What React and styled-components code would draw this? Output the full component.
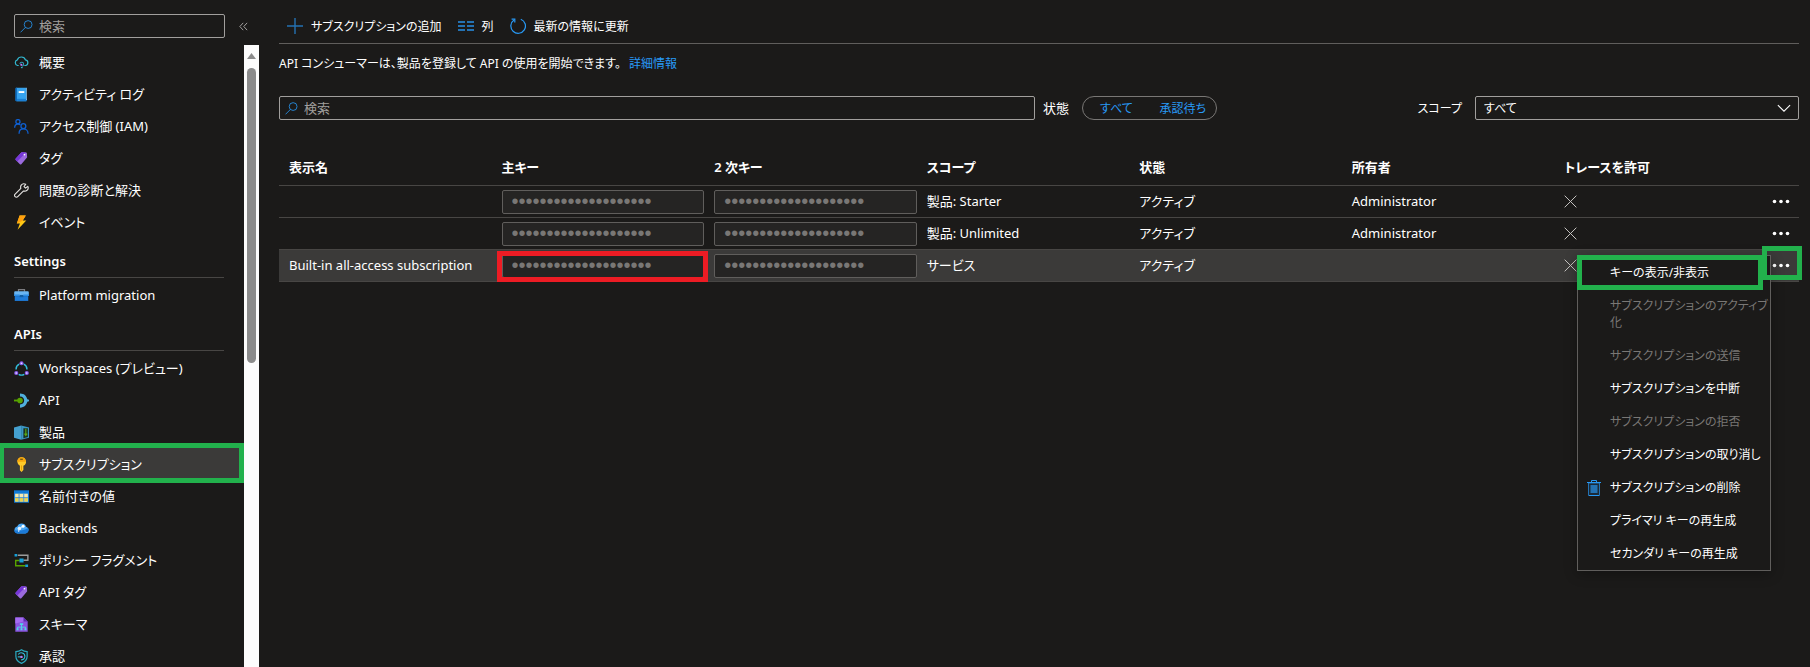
import React from "react";
import styled, { createGlobalStyle, css } from "styled-components";

const color = {
  page: "#1b1a19",
  raised: "#3b3a39",
  field: "#252423",
  line: "#484644",
  strong: "#605e5c",
  edge: "#a19f9d",
  text: "#ffffff",
  muted: "#797775",
  accent: "#2899f5",
  green: "#22b14c",
  red: "#ed1c24",
};

const GlobalStyle = createGlobalStyle`
  *, *::before, *::after { box-sizing: border-box; }
  body { margin: 0; background: ${color.page}; }
  body, button, input, select {
    font-family: "Noto Sans", "Noto Sans CJK JP", sans-serif;
    font-size: 13px;
    line-height: 17px;
    font-feature-settings: "palt";
    color: ${color.text};
  }
`;

const Shell = styled.div`
  display: flex;
  height: 100vh;
  overflow: hidden;
  background: ${color.page};
`;

/* ---------- Sidebar ---------- */

const Sidebar = styled.aside`
  flex: 0 0 259px;
  min-width: 0;
  display: flex;
  flex-direction: column;
`;

const SidebarTop = styled.div`
  display: flex;
  align-items: center;
  gap: 14px;
  padding: 14px 11px 7px 14px;
`;

const SearchBox = styled.label`
  display: flex;
  align-items: center;
  gap: 6px;
  flex: 1;
  min-width: 0;
  height: 24px;
  padding: 0 5px;
  border: 1px solid ${color.edge};
  border-radius: 2px;
  > svg { flex: none; }
`;

const SearchInput = styled.input`
  flex: 1;
  min-width: 0;
  padding: 0;
  border: 0;
  outline: 0;
  background: transparent;
  &::placeholder { color: ${color.edge}; opacity: 1; }
`;

const PlainButton = styled.button`
  display: inline-flex;
  align-items: center;
  padding: 0;
  border: 0;
  background: transparent;
  cursor: pointer;
`;

const SidebarBody = styled.div`
  display: flex;
  flex: 1;
  min-height: 0;
`;

const Nav = styled.nav`
  flex: 1;
  min-width: 0;
  padding-top: 1px;
  overflow: hidden;
`;

const NavHeading = styled.h2`
  margin: 0 20px 1px 14px;
  padding: 15px 0 7px;
  border-bottom: 1px solid ${color.line};
  font-size: 13px;
  line-height: 17px;
  font-weight: 600;
`;

const NavLink = styled.a`
  position: relative;
  display: flex;
  align-items: center;
  gap: 10px;
  height: 32px;
  padding-left: 14px;
  color: ${color.text};
  text-decoration: none;
  white-space: nowrap;
  background: ${(p) => (p.$active ? color.raised : "transparent")};
`;

const Highlight = styled.span`
  position: absolute;
  inset: ${(p) => p.$inset};
  border: 5px solid ${(p) => p.$color};
  pointer-events: none;
  z-index: 3;
`;

const ScrollTrack = styled.div`
  display: flex;
  flex-direction: column;
  align-items: center;
  gap: 9px;
  width: 15px;
  padding-top: 8px;
  background: #fcfcfc;
`;

const ScrollThumb = styled.div`
  width: 9px;
  height: 48%;
  border-radius: 5px;
  background: #8b8b8b;
`;

/* ---------- Main ---------- */

const Main = styled.main`
  flex: 1;
  min-width: 0;
  padding: 0 11px 0 20px;
`;

const Toolbar = styled.div`
  display: flex;
  align-items: center;
  gap: 16px;
  height: 44px;
  padding: 9px 8px 0;
  border-bottom: 1px solid ${color.strong};
`;

const ToolButton = styled(PlainButton)`
  gap: 8px;
  font-size: 12px;
  white-space: nowrap;
`;

const Intro = styled.p`
  margin: 11px 0 24px;
  font-size: 12px;
`;

const TextLink = styled.a`
  margin-left: 8px;
  color: ${color.accent};
  text-decoration: none;
`;

const Filters = styled.div`
  display: grid;
  grid-template-columns: 1fr 1fr;
  align-items: center;
  column-gap: 8px;
`;

const FilterGroup = styled.div`
  display: flex;
  align-items: center;
  gap: 13px;
  white-space: nowrap;
`;

const FilterEnd = styled(FilterGroup)`
  justify-content: space-between;
`;

const Pill = styled.div`
  display: flex;
  align-items: center;
  justify-content: space-between;
  width: 135px;
  height: 24px;
  padding: 0 10px 0 17px;
  border: 1px solid ${color.muted};
  border-radius: 12px;
`;

const PillButton = styled(PlainButton)`
  font-size: 12px;
  color: ${color.accent};
`;

const SelectWrap = styled.span`
  display: grid;
  align-items: center;
  width: 324px;
  > * { grid-area: 1 / 1; }
  > svg { justify-self: end; margin-right: 8px; pointer-events: none; }
`;

const Select = styled.select`
  appearance: none;
  height: 24px;
  padding: 0 8px;
  border: 1px solid ${color.edge};
  border-radius: 2px;
  background: transparent;
  font-size: 12px;
`;

const ScopeLabel = styled.label`
  font-size: 12px;
`;

const Table = styled.table`
  width: 100%;
  margin-top: 30px;
  table-layout: fixed;
  border-collapse: separate;
  border-spacing: 0;
  white-space: nowrap;
`;

const Th = styled.th`
  width: ${(p) => (p.$menu ? "32px" : "auto")};
  height: 36px;
  padding: 0 0 0 10px;
  border-bottom: 1px solid ${color.line};
  font-weight: 600;
  text-align: left;
`;

const Row = styled.tr`
  background: ${(p) => (p.$selected ? color.raised : "transparent")};
`;

const Td = styled.td`
  position: relative;
  height: 32px;
  padding: 0 0 0 ${(p) => (p.$menu ? "0" : "10px")};
  border-bottom: 1px solid ${color.line};
  > svg { display: block; }
`;

const KeyInput = styled.input`
  display: block;
  width: 100%;
  height: 24px;
  padding: 0 9px;
  border: 1px solid ${color.strong};
  border-radius: 2px;
  background: ${color.field};
  color: ${color.muted};
  font-family: "Liberation Sans", sans-serif;
  font-size: 20px;
`;

const MoreButton = styled(PlainButton)`
  display: flex;
  height: 24px;
  padding: 0 5px;
`;

const Menu = styled.div`
  position: absolute;
  top: 5px;
  right: 28px;
  z-index: 2;
  width: 194px;
  border: 1px solid ${color.strong};
  background: ${color.page};
  box-shadow: 0 3px 12px rgba(0, 0, 0, 0.3);
  white-space: normal;
`;

const MenuItem = styled.button`
  position: relative;
  display: grid;
  grid-template-columns: 14px 1fr;
  column-gap: 9px;
  align-items: center;
  width: 100%;
  padding: 8px 2px 8px 9px;
  border: 0;
  background: transparent;
  font-size: 12px;
  text-align: left;
  ${(p) => p.disabled && css`color: ${color.muted};`}
`;

const MenuText = styled.span`
  grid-column: 2;
`;

/* ---------- Icons ---------- */

const Icon = ({ size = 16, children, ...rest }) => (
  <svg width={size} height={size} viewBox="0 0 16 16" fill="none" aria-hidden="true" {...rest}>
    {children}
  </svg>
);

const SearchIcon = () => (
  <Icon size={13} stroke={color.accent}>
    <circle cx="10" cy="5.6" r="4.8" />
    <path d="M6.6 9.2L.6 15.2" />
  </Icon>
);
const CollapseIcon = () => (
  <Icon size={9} stroke="#c8c6c4" strokeWidth="1.4">
    <path d="M7.500 1.500L1.500 8l6 6.500M14.500 1.500L8.500 8l6 6.500" />
  </Icon>
);
const TagShape = () => (
  <g transform="translate(.6 .6) scale(.9)">
    <path d="M9 .8L13.6 1a1 1 0 0 1 1 1l.3 4.4a1.4 1.4 0 0 1-.4 1L8 15a1.2 1.2 0 0 1-1.7 0L1.4 10a1.2 1.2 0 0 1 0-1.7L7.9 1.2A1.4 1.4 0 0 1 9 .8z" fill="#9a6add" />
    <path d="M9 .8L13.6 1 3.200 11.800 1.4 10a1.2 1.2 0 0 1 0-1.7L7.9 1.2A1.4 1.4 0 0 1 9 .8z" fill="#7636d8" />
    <circle cx="11.7" cy="3.6" r="1" fill="#fff" />
  </g>
);

const icons = {
  overview: (
    <>
      <path d="M5 11.200H3.800A3.100 3.100 0 0 1 3.600 5.200 4.600 4.600 0 0 1 12.300 5.300 3 3 0 0 1 12.300 11.200h-1.300" stroke="#32b8d0" strokeWidth="1.300" />
      <path d="M6.200 9.400A2.100 2.100 0 1 1 8.400 12" stroke="#2f9fb8" strokeWidth="1.100" />
      <circle cx="7.800" cy="10.400" r="1.200" fill="#b77af4" />
      <path d="M7.400 13.400h1.800" stroke="#32b8d0" strokeWidth="1.300" />
    </>
  ),
  log: (
    <>
      <path d="M2 .8h10.8v14.4H3a1.2 1.2 0 0 1-1.2-1.2z" fill="#36a3ee" />
      <path d="M1.4 1.6A1 1 0 0 1 2.4.8h.8v14.4h-.8a1 1 0 0 1-1-1z" fill="#0f6cbd" />
      <path d="M3.2 12.6h10.4v2.6H3.2z" fill="#1c80d3" />
      <path d="M12.8.8h.8v13h-.8z" fill="#8fd0ff" />
      <path d="M5 4.4h6v2H5z" fill="#fff" />
    </>
  ),
  iam: (
    <g stroke="#0f5fcf" strokeWidth="1.4">
      <circle cx="4.2" cy="2.8" r="2.2" />
      <path d="M.7 9.4C.7 7 2 5.4 4.2 5.4c1 0 1.8.3 2.4.8" />
      <circle cx="10" cy="7.6" r="2.6" />
      <path d="M5.4 15.6c0-3 1.8-5 4.6-5s5 2 5 5" />
    </g>
  ),
  tag: <TagShape />,
  wrench: (
    <path d="M14.8 3.6l-2.5 1.8-1.6-1.6 1.8-2.5C10.7.5 8.700.8 7.700 2.300c-.8 1.200-.8 2.300-.4 3.400L1.200 11.800a1.900 1.900 0 0 0 2.800 2.800l6.200-6.100c1.200.4 2.400.3 3.400-.5 1.400-1 1.800-2.900 1.200-4.400z" stroke="#e6e4e2" strokeWidth="1.200" strokeLinejoin="round" />
  ),
  bolt: (
    <>
      <path d="M6 .4h6.600L9.300 5.800h3.800L3.800 15.700l2.500-6.600H3z" fill="#ffc814" />
      <path d="M6 .4h6.600L9.300 5.800 3 9.100z" fill="#ff9f0e" />
    </>
  ),
  toolbox: (
    <>
      <path d="M4.800 4V1.800h6.400V4" stroke="#7c7c80" strokeWidth="1.300" />
      <path d="M1.200 3.400h13.600a1 1 0 0 1 1 1v4.200H.2V4.400a1 1 0 0 1 1-1z" fill="#69b5f2" />
      <path d="M.8 8.600h14.400v5.200H.8z" fill="#1e7bd8" />
      <path d="M0 6.800h6v1.600h4V6.800h6v1.800H0z" fill="#2a8be4" />
      <path d="M6 7.400h4v2.400H6z" fill="#115ea3" />
    </>
  ),
  workspaces: (
    <>
      <path d="M5.600 3.400A6 6 0 0 0 2.200 9M10.400 3.400A6 6 0 0 1 13.800 9M5 14.200a6 6 0 0 0 6 0" stroke="#32bedd" strokeWidth="1.500" />
      <circle cx="8" cy="2.400" r="2.200" fill="#8a5cf0" />
      <circle cx="2.400" cy="12.800" r="2.200" fill="#8a5cf0" />
      <circle cx="13.600" cy="12.800" r="2.200" fill="#8a5cf0" />
      <g fill="#e7dcff"><circle cx="8" cy="2.400" r=".9" /><circle cx="2.400" cy="12.800" r=".9" /><circle cx="13.600" cy="12.800" r=".9" /></g>
    </>
  ),
  api: (
    <>
      <path d="M6.400.4c5 0 7 3.200 7.800 6.200l1.800.6v1.600l-1.800.6c-.8 3-2.800 6.200-7.800 6.200v-3.400c3 0 4.400-2 4.400-4.200S9.400 3.800 6.400 3.800z" fill="#50b0dc" />
      <circle cx="6.400" cy="8" r="3" fill="#57a300" />
      <path d="M0 7h5v2H0z" fill="#57a300" />
    </>
  ),
  product: (
    <>
      <path d="M0 2.600L7.600.4v15.200L0 13.600z" fill="#45a0cf" />
      <path d="M7.600.4L16 2.600v11l-8.400 2z" fill="#3a96c4" />
      <path d="M10 3.400h4.800v9.400L10 14z" fill="#1b3322" />
      <path d="M12.600 4v7M11.200 9.200l1.400 2 1.400-2" stroke="#5aa816" strokeWidth="1.200" />
    </>
  ),
  key: (
    <>
      <path d="M8 .3a4.700 4.700 0 0 1 2 9v4.600L8 15.900l-1.700-1.700v-5A4.700 4.700 0 0 1 8 .3z" fill="#ffca28" />
      <path d="M8 .3a4.700 4.700 0 0 1 4.700 4.700H3.300A4.700 4.700 0 0 1 8 .3z" fill="#f7a60d" />
      <path d="M6.600 1.800h2.800V3H6.600z" fill="#5e4a10" />
      <path d="M8 9v5.200" stroke="#d98f00" strokeWidth=".8" />
    </>
  ),
  values: (
    <>
      <path d="M0 1.400h16v13.200H0z" fill="#0f7ad8" />
      <path d="M1.200 5h13.600v8.400H1.200z" fill="#f5e9b0" />
      <path d="M1.200 9.600h3.600v3.800H1.200zM6 9.600h3.800v3.800H6zM11 9.600h3.800v3.800H11z" fill="#edd34c" />
      <path d="M5.400 5v8.400M10.400 5v8.400M1.200 9.200h13.600" stroke="#2b88d8" strokeWidth=".9" />
    </>
  ),
  cloud: (
    <>
      <path d="M3.800 13.200a3.700 3.700 0 0 1-.3-7.300A4.900 4.900 0 0 1 12.800 6a3.700 3.700 0 0 1-.6 7.200z" fill="#4aa6f2" />
      <path d="M3.800 13.200A3.700 3.700 0 0 1 .2 9.600c4 1.200 10 .8 14.800-2.200a3.700 3.700 0 0 1-2.800 5.800z" fill="#1b7ad8" />
      <path d="M6 8l3.500-2.300" stroke="#fff" strokeWidth=".8" />
      <circle cx="5.800" cy="8" r="1.900" fill="#e3f1ff" />
      <circle cx="9.700" cy="5.600" r="1.600" fill="#fff" />
      <circle cx="5" cy="10.600" r=".8" fill="#fff" />
    </>
  ),
  policy: (
    <>
      <path d="M4 2.400h10.800v5.400H10" stroke="#9b9b9b" strokeWidth="1.500" />
      <path d="M6 8H1.800v5.600H12" stroke="#57a300" strokeWidth="1.500" />
      <path d="M5.800 5.800h4.400v4.400H5.800zM.6 1h2.800v2.800H.6zM12 12.200h3V15h-3z" fill="#16a0d8" />
    </>
  ),
  schema: (
    <>
      <path d="M1.400.4h8.800l4.400 4.400v10.800H1.400z" fill="#8c52e0" />
      <path d="M1.400.4h8.800v4.400l-8.800 2z" fill="#a56cf2" />
      <path d="M10.200.4l4.400 4.400h-4.400z" fill="#5c2fb0" />
      <path d="M8 8v2.800M3.800 12.600v-1.800h8.400v1.800M8 10.800v1.800" stroke="#4fd8e8" />
      <path d="M6.200 6.600h3.600v2H6.200zM2.800 12h2v2h-2zM7 12h2v2H7zM11.200 12h2v2h-2z" fill="#4fd8e8" />
    </>
  ),
  approval: (
    <>
      <path d="M8 .8c2 1.400 4 1.900 6 2v5c0 4-3 6.300-6 7.500-3-1.200-6-3.500-6-7.500v-5c2-.1 4-.6 6-2z" stroke="#2aa8bf" strokeWidth="1.300" />
      <path d="M4.600 5.800A3.800 3.800 0 0 1 11.600 8 3.800 3.800 0 0 1 7.600 11.600" stroke="#32bedd" strokeWidth="1.200" />
      <path d="M4 8.400h4" stroke="#32bedd" strokeWidth="1.200" />
      <circle cx="8" cy="8.400" r="1.300" fill="#b77af4" />
    </>
  ),
};

const AddIcon = () => (
  <Icon stroke="#2472b3" strokeWidth="2"><path d="M8 0v16M0 8h16" strokeWidth="1.400" /></Icon>
);
const ColumnsIcon = () => (
  <Icon stroke="#2472b3" strokeWidth="2"><path d="M0 4h7M0 8h7M0 12h7M9 4h7M9 8h7M9 12h7" /></Icon>
);
const RefreshIcon = () => (
  <Icon stroke={color.accent} strokeWidth="1.200">
    <path d="M10.800 1.200A7.300 7.300 0 1 1 4 2" />
    <path d="M1.600 1.200h3.200v3.400" />
  </Icon>
);
const ChevronIcon = () => (
  <Icon size={14} stroke={color.text} strokeWidth="1.200"><path d="M1 4.600l7 7 7-7" /></Icon>
);
const CrossIcon = () => (
  <Icon size={13} stroke="#c8c6c4" strokeWidth="1.200"><path d="M.8.8l14.400 14.400M15.200.8L.8 15.200" /></Icon>
);
const MoreIcon = () => (
  <svg width="18" height="5" viewBox="0 0 18 5" fill={color.text} aria-hidden="true">
    <circle cx="2.500" cy="2.500" r="1.800" /><circle cx="9" cy="2.500" r="1.800" /><circle cx="15.500" cy="2.500" r="1.800" />
  </svg>
);
const TrashIcon = () => (
  <svg width="14" height="16" viewBox="0 0 14 16" fill="none" stroke={color.accent} aria-hidden="true">
    <path d="M1.500 3h11v12.500h-11z" fill="#1b2a38" stroke="#2472b3" />
    <path d="M3.500 5h7v8h-7z" fill="#2472b3" stroke="none" />
    <path d="M0 2.500h14M4.500 2V.5h5V2M2 15.500h10" />
  </svg>
);

/* ---------- Data ---------- */

const groups = [
  {
    items: [
      ["overview", "概要"],
      ["log", "アクティビティ ログ"],
      ["iam", "アクセス制御 (IAM)"],
      ["tag", "タグ"],
      ["wrench", "問題の診断と解決"],
      ["bolt", "イベント"],
    ],
  },
  { title: "Settings", items: [["toolbox", "Platform migration"]] },
  {
    title: "APIs",
    items: [
      ["workspaces", "Workspaces (プレビュー)"],
      ["api", "API"],
      ["product", "製品"],
      ["key", "サブスクリプション"],
      ["values", "名前付きの値"],
      ["cloud", "Backends"],
      ["policy", "ポリシー フラグメント"],
      ["tag", "API タグ"],
      ["schema", "スキーマ"],
      ["approval", "承認"],
    ],
  },
];

const columns = ["表示名", "主キー", "2 次キー", "スコープ", "状態", "所有者", "トレースを許可"];

const rows = [
  { name: "", scope: "製品: Starter", state: "アクティブ", owner: "Administrator" },
  { name: "", scope: "製品: Unlimited", state: "アクティブ", owner: "Administrator" },
  { name: "Built-in all-access subscription", scope: "サービス", state: "アクティブ", owner: "", selected: true },
];

const menuItems = [
  { label: "キーの表示/非表示", marked: true },
  { label: "サブスクリプションのアクティブ化", disabled: true },
  { label: "サブスクリプションの送信", disabled: true },
  { label: "サブスクリプションを中断" },
  { label: "サブスクリプションの拒否", disabled: true },
  { label: "サブスクリプションの取り消し" },
  { label: "サブスクリプションの削除", icon: true },
  { label: "プライマリ キーの再生成" },
  { label: "セカンダリ キーの再生成" },
];

const maskedKey = "00000000000000000000";

const ContextMenu = () => (
  <Menu role="menu">
    {menuItems.map((item) => (
      <MenuItem key={item.label} role="menuitem" disabled={item.disabled}>
        {item.icon && <TrashIcon />}
        <MenuText>{item.label}</MenuText>
        {item.marked && <Highlight $color={color.green} $inset="-1px 7px -1px -1px" />}
      </MenuItem>
    ))}
  </Menu>
);

export default function App() {
  return (
    <>
      <GlobalStyle />
      <Shell>
        <Sidebar>
          <SidebarTop>
            <SearchBox>
              <SearchIcon />
              <SearchInput type="text" placeholder="検索" aria-label="メニューの検索" />
            </SearchBox>
            <PlainButton aria-label="折りたたむ"><CollapseIcon /></PlainButton>
          </SidebarTop>
          <SidebarBody>
            <Nav>
              {groups.map((group, i) => (
                <React.Fragment key={i}>
                  {group.title && <NavHeading>{group.title}</NavHeading>}
                  {group.items.map(([icon, label]) => (
                    <NavLink key={label} href="#" $active={icon === "key"}>
                      <Icon size={15}>{icons[icon]}</Icon>
                      {label}
                      {icon === "key" && <Highlight $color={color.green} $inset="-5px 0 -3px -1px" />}
                    </NavLink>
                  ))}
                </React.Fragment>
              ))}
            </Nav>
            <ScrollTrack>
              <svg width="9" height="6" viewBox="0 0 9 6" aria-hidden="true">
                <path d="M4.500 0L9 6H0z" fill="#8b8b8b" />
              </svg>
              <ScrollThumb />
            </ScrollTrack>
          </SidebarBody>
        </Sidebar>
        <Main>
          <Toolbar>
            <ToolButton><AddIcon />サブスクリプションの追加</ToolButton>
            <ToolButton><ColumnsIcon />列</ToolButton>
            <ToolButton><RefreshIcon />最新の情報に更新</ToolButton>
          </Toolbar>
          <Intro>
            API コンシューマーは、製品を登録して API の使用を開始できます。<TextLink href="#">詳細情報</TextLink>
          </Intro>
          <Filters>
            <SearchBox>
              <SearchIcon />
              <SearchInput type="text" placeholder="検索" aria-label="サブスクリプションの検索" />
            </SearchBox>
            <FilterEnd>
              <FilterGroup role="group" aria-labelledby="state-label">
                <span id="state-label">状態</span>
                <Pill>
                  <PillButton>すべて</PillButton>
                  <PillButton>承認待ち</PillButton>
                </Pill>
              </FilterGroup>
              <FilterGroup>
                <ScopeLabel htmlFor="scope">スコープ</ScopeLabel>
                <SelectWrap>
                  <Select id="scope"><option>すべて</option></Select>
                  <ChevronIcon />
                </SelectWrap>
              </FilterGroup>
            </FilterEnd>
          </Filters>
          <Table>
            <thead>
              <tr>
                {columns.map((c) => <Th key={c} scope="col">{c}</Th>)}
                <Th $menu aria-label="操作" />
              </tr>
            </thead>
            <tbody>
              {rows.map((row, i) => (
                <Row key={i} $selected={row.selected}>
                  <Td>{row.name}</Td>
                  <Td>
                    <KeyInput type="password" defaultValue={maskedKey} disabled aria-label="主キー" />
                    {row.selected && <Highlight $color={color.red} $inset="1px -4px -1px 5px" />}
                  </Td>
                  <Td><KeyInput type="password" defaultValue={maskedKey} disabled aria-label="2 次キー" /></Td>
                  <Td>{row.scope}</Td>
                  <Td>{row.state}</Td>
                  <Td>{row.owner}</Td>
                  <Td><CrossIcon /></Td>
                  <Td $menu>
                    <MoreButton aria-label="その他"><MoreIcon /></MoreButton>
                    {row.selected && <ContextMenu />}
                    {row.selected && <Highlight $color={color.green} $inset="-4px -3px 1px -5px" />}
                  </Td>
                </Row>
              ))}
            </tbody>
          </Table>
        </Main>
      </Shell>
    </>
  );
}
